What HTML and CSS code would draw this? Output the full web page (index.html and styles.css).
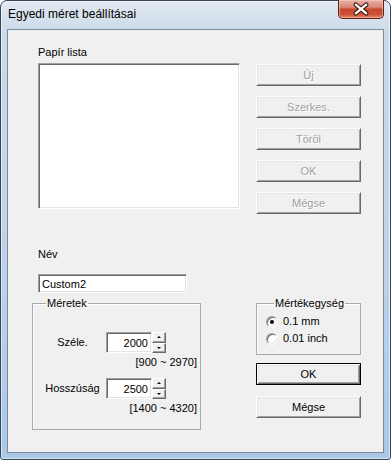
FILE: index.html
```html
<!DOCTYPE html>
<html lang="hu">
<head>
    <meta charset="UTF-8">
    <meta name="viewport" content="width=device-width, initial-scale=1.0">
    <title>Egyedi méret beállításai</title>
    <link rel="stylesheet" href="styles.css">
</head>
<body>
    <div class="window">
        <!-- Title Bar -->
        <div class="titlebar">
            <span class="title">Egyedi méret beállításai</span>
            <button class="close-button" aria-label="Bezárás">
                <svg width="46" height="18" viewBox="0 0 46 18">
                    <path d="M17.5 4.5 L28.5 13.5 M28.5 4.5 L17.5 13.5" stroke="#3b1710" stroke-width="4.6" stroke-linecap="round"/>
                    <path d="M17.5 4.5 L28.5 13.5 M28.5 4.5 L17.5 13.5" stroke="#ffffff" stroke-width="2.4" stroke-linecap="round"/>
                </svg>
            </button>
        </div>

        <div class="client">
            <!-- Paper List -->
            <div class="top-row">
                <div class="list-col">
                    <div class="label">Papír lista</div>
                    <div class="listbox"></div>
                </div>
                <div class="btn-col">
                    <button class="button" disabled>Új</button>
                    <button class="button" disabled>Szerkes.</button>
                    <button class="button" disabled>Töröl</button>
                    <button class="button" disabled>OK</button>
                    <button class="button" disabled>Mégse</button>
                </div>
            </div>

            <!-- Name -->
            <div class="label name-label">Név</div>
            <input type="text" class="text-field name-field" value="Custom2">

            <div class="bottom-row">
                <!-- Dimensions -->
                <fieldset class="group size-group">
                    <legend>Méretek</legend>
                    <div class="size-row">
                        <span class="size-label">Széle.</span>
                        <input type="text" class="text-field number-field" value="2000">
                        <div class="spinner"><span class="spin up"></span><span class="spin down"></span></div>
                    </div>
                    <div class="range">[900 ~ 2970]</div>
                    <div class="size-row second">
                        <span class="size-label">Hosszúság</span>
                        <input type="text" class="text-field number-field" value="2500">
                        <div class="spinner"><span class="spin up"></span><span class="spin down"></span></div>
                    </div>
                    <div class="range">[1400 ~ 4320]</div>
                </fieldset>

                <div class="right-col">
                    <!-- Units -->
                    <fieldset class="group unit-group">
                        <legend>Mértékegység</legend>
                        <label class="radio-row"><span class="radio checked"></span>0.1 mm</label>
                        <label class="radio-row"><span class="radio"></span>0.01 inch</label>
                    </fieldset>
                    <button class="button default">OK</button>
                    <button class="button cancel">Mégse</button>
                </div>
            </div>
        </div>
    </div>
</body>
</html>
```

FILE: styles.css
```css
/* General Reset and Basic Styles */
* {
    margin: 0;
    padding: 0;
    box-sizing: border-box;
}

body {
    font-family: "Liberation Sans", Arial, sans-serif;
    font-size: 11px;
    background-color: #ffffff;
}

/* Window Frame */
.window {
    width: 391px;
    height: 460px;
    border: 1px solid #34465a;
    border-radius: 7px 7px 3px 3px;
    padding: 0 6px 6px 6px;
    background: linear-gradient(to bottom, #e2e9f1 0, #ccdaea 30px, #bcd2ea 60%, #aac7e6 100%);
    box-shadow: inset 0 0 0 1px rgba(255, 255, 255, 0.55);
    display: flex;
    flex-direction: column;
}

/* Title Bar */
.titlebar {
    height: 28px;
    display: flex;
    align-items: flex-start;
}

.title {
    font-size: 12px;
    line-height: 15px;
    padding: 6px 0 0 1px;
    color: #000;
}

.close-button {
    margin-left: auto;
    margin-right: 0;
    margin-top: -1px;
    width: 46px;
    height: 19px;
    border: 1px solid #5a2217;
    border-top: none;
    border-radius: 0 0 5px 5px;
    background: linear-gradient(to bottom, #eab0a3 0, #d98876 40%, #c8472e 52%, #cc5237 80%, #e08a66 100%);
    box-shadow: inset 0 0 0 1px rgba(255, 220, 210, 0.45);
    display: flex;
    align-items: center;
    justify-content: center;
}

/* Client Area */
.client {
    flex: 1;
    border: 1px solid #7a8a9c;
    background-color: #f0f0f0;
    padding-top: 16px;
}

.label {
    line-height: 13px;
    color: #000;
}

.top-row {
    display: flex;
    align-items: flex-start;
}

.list-col {
    margin-left: 30px;
    width: 202px;
}

.list-col .label {
    margin-bottom: 4px;
}

.listbox {
    height: 146px;
    background-color: #fff;
    border: 1px solid;
    border-color: #a0a0a0 #ffffff #ffffff #a0a0a0;
    box-shadow: inset 1px 1px 0 #696969, inset -1px -1px 0 #e3e3e3;
}

.btn-col {
    margin-left: 16px;
    padding-top: 18px;
    width: 105px;
    display: flex;
    flex-direction: column;
    gap: 10px;
}

/* Buttons */
.button {
    display: block;
    width: 105px;
    height: 22px;
    font-family: inherit;
    font-size: 11px;
    color: #000;
    background-color: #f0f0f0;
    border: 1px solid;
    border-color: #ffffff #696969 #696969 #ffffff;
    box-shadow: inset 1px 1px 0 #e3e3e3, inset -1px -1px 0 #a0a0a0;
}

.button:disabled {
    color: #a0a0a0;
    text-shadow: 1px 1px 0 #ffffff;
}

.button.default {
    border: 1px solid #000;
    box-shadow: inset 1px 1px 0 #ffffff, inset -1px -1px 0 #696969, inset 2px 2px 0 #e3e3e3, inset -2px -2px 0 #a0a0a0;
    margin-top: 8px;
}

.button.cancel {
    margin-top: 11px;
}

/* Text Fields */
.text-field {
    display: block;
    font-family: inherit;
    font-size: 11px;
    color: #000;
    background-color: #fff;
    border: 1px solid;
    border-color: #a0a0a0 #ffffff #ffffff #a0a0a0;
    box-shadow: inset 1px 1px 0 #696969, inset -1px -1px 0 #e3e3e3;
    outline: none;
}

.name-label {
    margin: 34px 0 0 30px;
}

.name-field {
    margin: 13px 0 0 30px;
    width: 149px;
    height: 19px;
    padding: 1px 3px 0 3px;
}

/* Group Boxes */
.bottom-row {
    display: flex;
    align-items: flex-start;
    margin-top: 4px;
}

.group {
    border: 1px solid #a9a9a9;
    box-shadow: inset 1px 1px 0 #ffffff;
}

.group legend {
    line-height: 13px;
    padding: 0 1px;
    margin-left: 7px;
}

.size-group {
    margin-left: 24px;
    width: 169px;
    height: 133px;
    padding: 22px 3px 0 6px;
}

.size-row {
    display: flex;
    align-items: center;
    height: 21px;
}

.size-row.second {
    margin-top: 9px;
}

.size-label {
    width: 67px;
    text-align: center;
    line-height: 13px;
}

.number-field {
    width: 46px;
    height: 21px;
    text-align: right;
    padding: 1px 3px 0 2px;
}

.spinner {
    width: 14px;
    height: 21px;
    display: flex;
    flex-direction: column;
}

.spin {
    flex: 1;
    background-color: #f0f0f0;
    border: 1px solid;
    border-color: #ffffff #696969 #696969 #ffffff;
    box-shadow: inset -1px -1px 0 #a0a0a0;
    display: flex;
    align-items: center;
    justify-content: center;
}

.spin::after {
    content: "";
    width: 0;
    height: 0;
    border-left: 2px solid transparent;
    border-right: 2px solid transparent;
}

.spin.up::after {
    border-bottom: 2px solid #000;
}

.spin.down::after {
    border-top: 2px solid #000;
}

.range {
    text-align: right;
    line-height: 13px;
    margin-top: 3px;
}

.right-col {
    margin-left: 55px;
    width: 105px;
    display: flex;
    flex-direction: column;
}

.unit-group {
    width: 105px;
    height: 58px;
    padding: 3px 0 0 9px;
}

.unit-group legend {
    margin-left: 8px;
}

/* Radio Buttons */
.radio-row {
    display: flex;
    align-items: center;
    height: 17px;
    line-height: 13px;
}

.radio {
    position: relative;
    width: 12px;
    height: 12px;
    margin-right: 5px;
    border-radius: 50%;
    background-color: #fff;
    border: 1px solid;
    border-color: #a0a0a0 #ffffff #ffffff #a0a0a0;
    box-shadow: inset 1px 1px 0 #696969, inset -1px -1px 0 #e3e3e3;
}

.radio.checked::after {
    content: "";
    position: absolute;
    left: 3px;
    top: 3px;
    width: 4px;
    height: 4px;
    border-radius: 50%;
    background-color: #000;
}
```
